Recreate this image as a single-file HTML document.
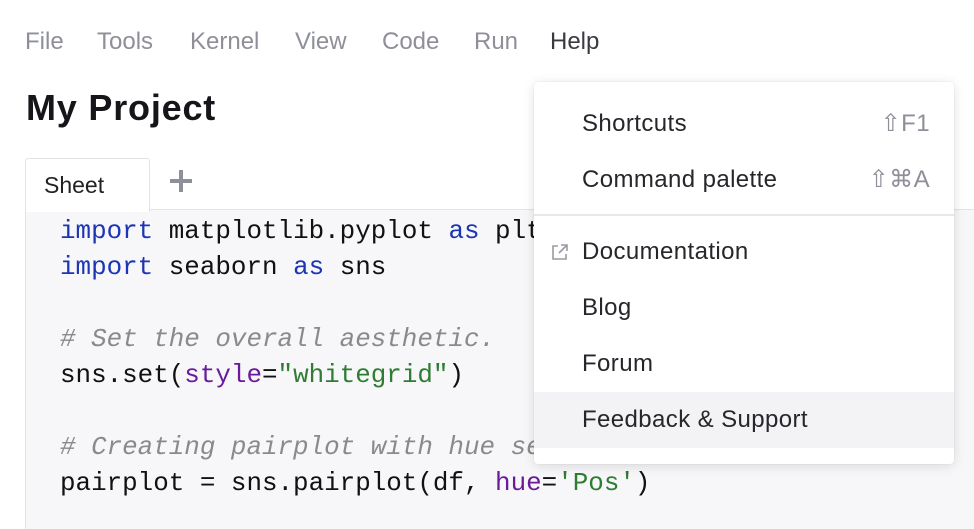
<!DOCTYPE html>
<html><head><meta charset="utf-8"><style>
*{margin:0;padding:0;box-sizing:border-box}
body{width:974px;height:508px;overflow:hidden;background:#fff;font-family:"Liberation Sans",sans-serif;position:relative}
.mb{position:absolute;top:28px;font-size:24px;color:#8e8f98}
.t{position:absolute;left:26px;top:87px;font-size:36px;font-weight:bold;color:#16161a;letter-spacing:0.8px}
.tab{position:absolute;left:25px;top:158px;width:125px;height:54px;border:1px solid #e3e3e6;border-bottom:none;background:#fff;border-radius:3px 3px 0 0;font-size:23px;color:#222;padding:13px 0 0 18px;z-index:2}
.plus{position:absolute;left:168px;top:168px;width:26px;height:26px}
.plus:before{content:"";position:absolute;left:11px;top:2px;width:4px;height:22px;background:#8e8f98}
.plus:after{content:"";position:absolute;left:2px;top:11px;width:22px;height:4px;background:#8e8f98}
.ed{position:absolute;left:25px;top:209px;width:960px;height:320px;background:#f7f7f9;border-top:1px solid #e3e3e6;border-left:1px solid #e3e3e6}
pre{position:absolute;left:60px;top:213px;font-family:"Liberation Mono",monospace;font-size:25.9px;line-height:36px;color:#111}
.k{color:#1c35b5}.c{color:#8a8a8a;font-style:italic}.p{color:#6a1b9a}.s{color:#2e7d32}
.menu{position:absolute;left:534px;top:82px;width:420px;height:382px;background:#fff;border-radius:4px;box-shadow:0 2px 12px rgba(0,0,0,.12),0 0 1px rgba(0,0,0,.15)}
.it{position:absolute;left:0;width:420px;height:56px;font-size:24px;letter-spacing:0.4px;color:#26262b;padding-left:48px;line-height:56px}
.sc{position:absolute;right:24px;top:0;color:#8e8f98}
.sep{position:absolute;left:0;top:132px;width:420px;height:2px;background:#e8e8ea}
</style></head><body>
<div class="mb" style="left:25px">File</div>
<div class="mb" style="left:97px">Tools</div>
<div class="mb" style="left:190px">Kernel</div>
<div class="mb" style="left:295px">View</div>
<div class="mb" style="left:382px">Code</div>
<div class="mb" style="left:474px">Run</div>
<div class="mb" style="left:550px;color:#3a3a42">Help</div>
<div class="t">My Project</div>
<div class="ed"></div>
<div class="tab">Sheet</div>
<div class="plus"></div>
<pre><span class="k">import</span> matplotlib.pyplot <span class="k">as</span> plt
<span class="k">import</span> seaborn <span class="k">as</span> sns

<span class="c"># Set the overall aesthetic.</span>
sns.set(<span class="p">style</span>=<span class="s">"whitegrid"</span>)

<span class="c"># Creating pairplot with hue setting</span>
pairplot = sns.pairplot(df, <span class="p">hue</span>=<span class="s">'Pos'</span>)</pre>
<div class="menu">
<div class="it" style="top:14px">Shortcuts<span class="sc">⇧F1</span></div>
<div class="it" style="top:70px">Command palette<span class="sc">⇧⌘A</span></div>
<div class="sep"></div>
<div class="it" style="top:142px"><svg style="position:absolute;left:17px;top:19px" width="18" height="18" viewBox="0 0 18 18" fill="none" stroke="#9a9aa2" stroke-width="1.6"><path d="M7 3H2v13h13v-5"/><path d="M10 2h6v6M16 2L8 10"/></svg>Documentation</div>
<div class="it" style="top:198px">Blog</div>
<div class="it" style="top:254px">Forum</div>
<div class="it" style="top:310px;background:#f3f3f5">Feedback &amp; Support</div>
</div>
</body></html>
